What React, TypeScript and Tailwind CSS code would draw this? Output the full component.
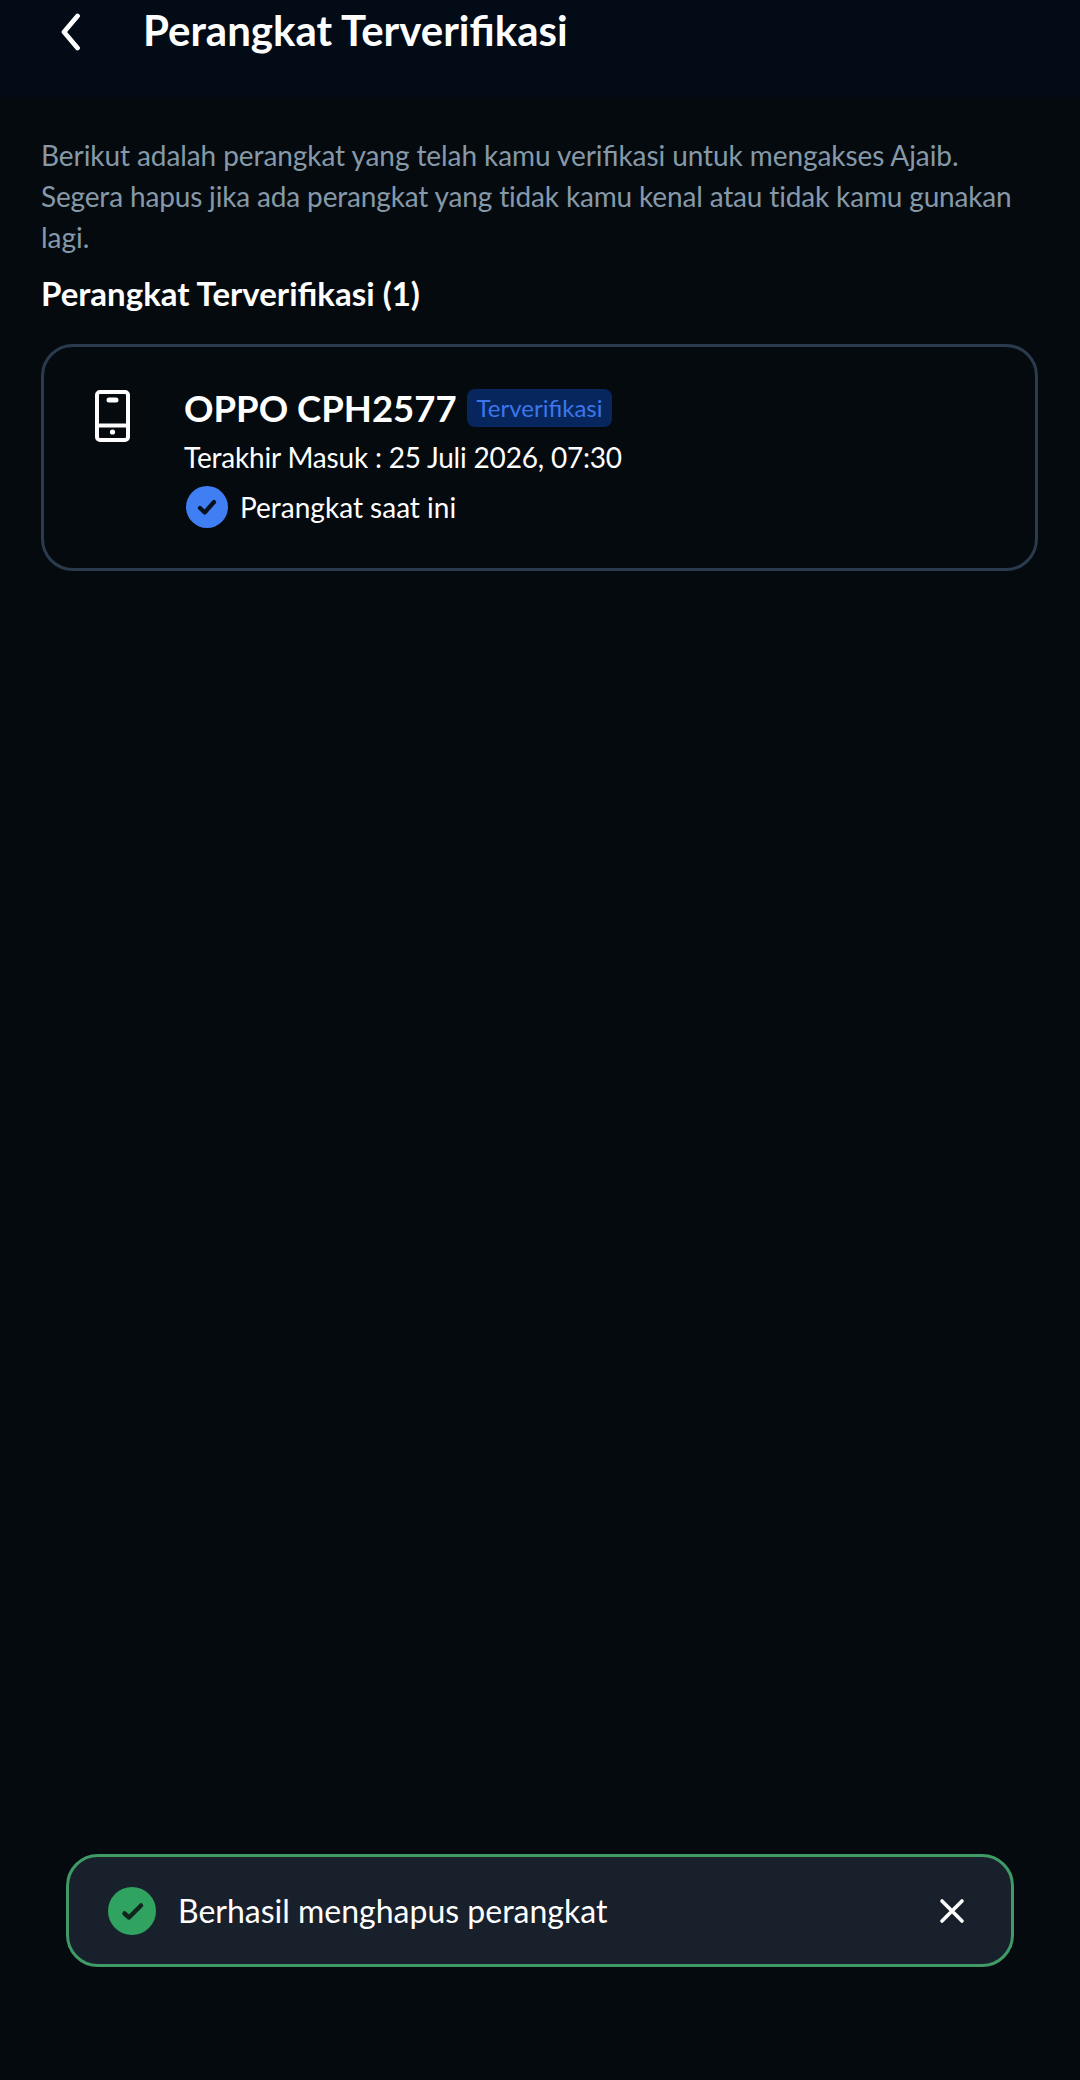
export default function App() {
  return (
    <div className="relative h-[2080px] w-[1080px] overflow-hidden bg-[#050a0f] font-['Lato',sans-serif] text-white">
      <header className="flex h-[97px] items-start bg-[#020b16] pl-[60px] pt-[7px]">
        <svg width="22" height="38" viewBox="0 0 22 38" fill="none" className="mt-[6px]">
          <path d="M17.5 3 L4 19 L17.5 35" stroke="#fff" strokeWidth="4.8" strokeLinecap="round" strokeLinejoin="round" />
        </svg>
        <h1 className="ml-[61px] text-[42px] font-bold leading-[46px]">Perangkat Terverifikasi</h1>
      </header>
      <main className="px-[41px] pt-[38px]">
        <p className="text-[28px] leading-[41px] text-[#8699a8]">
          <span className="block tracking-[-0.08px]">
            Berikut adalah perangkat yang telah kamu veri<span className="tracking-normal">fi</span>kasi untuk mengakses Ajaib.
          </span>
          <span className="block tracking-[-0.16px]">Segera hapus jika ada perangkat yang tidak kamu kenal atau tidak kamu gunakan</span>
          <span className="block">lagi.</span>
        </p>
        <h2 className="mt-[15px] text-[33px] font-bold leading-[40px]">Perangkat Terverifikasi (1)</h2>
        <section className="mt-[31px] flex h-[227px] w-[997px] rounded-[32px] border-[3px] border-[#2a3b4e] pl-[51px] pt-[43px]">
          <svg width="35" height="52" viewBox="0 0 35 52" fill="none" className="shrink-0">
            <rect x="2" y="2" width="31" height="48" rx="3" stroke="#fff" strokeWidth="4" />
            <path d="M2 35.5H33" stroke="#fff" strokeWidth="4" />
            <path d="M14 10H21" stroke="#fff" strokeWidth="5" strokeLinecap="round" />
            <circle cx="17.5" cy="42" r="2.6" fill="#fff" />
          </svg>
          <div className="ml-[54px] flex flex-col">
            <div className="-mt-[3px] flex h-[42px] items-center">
              <span className="text-[36.5px] font-bold leading-[42px]">OPPO CPH2577</span>
              <span className="ml-[10px] rounded-[8px] bg-[#07265e] px-[10px] text-[24px] leading-[38px] text-[#3b76ea]">Terverifikasi</span>
            </div>
            <div className="mt-[8px] text-[28px] leading-[40px] tracking-[-0.19px]">Terakhir Masuk : 25 Juli 2026, 07:30</div>
            <div className="mt-[9px] flex items-center pl-[2px]">
              <svg width="42" height="42" viewBox="0 0 42 42" className="shrink-0">
                <circle cx="21" cy="21" r="21" fill="#3f7ef3" />
                <path d="M14 22 L18.7 26.5 L28 16" fill="none" stroke="#07101d" strokeWidth="4.2" strokeLinecap="round" strokeLinejoin="round" />
              </svg>
              <span className="ml-[12px] text-[28px] leading-[40px]">Perangkat saat ini</span>
            </div>
          </div>
        </section>
      </main>
      <div className="absolute left-[66px] top-[1854px] flex h-[113px] w-[948px] items-center rounded-[32px] border-[3px] border-[#3f9a66] bg-[#18202c] pl-[39px] pr-[46px]">
        <svg width="48" height="48" viewBox="0 0 48 48" className="shrink-0">
          <circle cx="24" cy="24" r="24" fill="#2fa35f" />
          <path d="M16.5 26.5 L21 30.5 L33 18.5" fill="none" stroke="#10261f" strokeWidth="4.5" strokeLinecap="round" strokeLinejoin="round" />
        </svg>
        <span className="ml-[22px] flex-1 text-[32px] leading-[40px]">Berhasil menghapus perangkat</span>
        <svg width="26" height="26" viewBox="0 0 26 26" className="shrink-0">
          <path d="M3 3 L23 23 M23 3 L3 23" stroke="#fff" strokeWidth="3.6" strokeLinecap="round" />
        </svg>
      </div>
    </div>
  );
}
